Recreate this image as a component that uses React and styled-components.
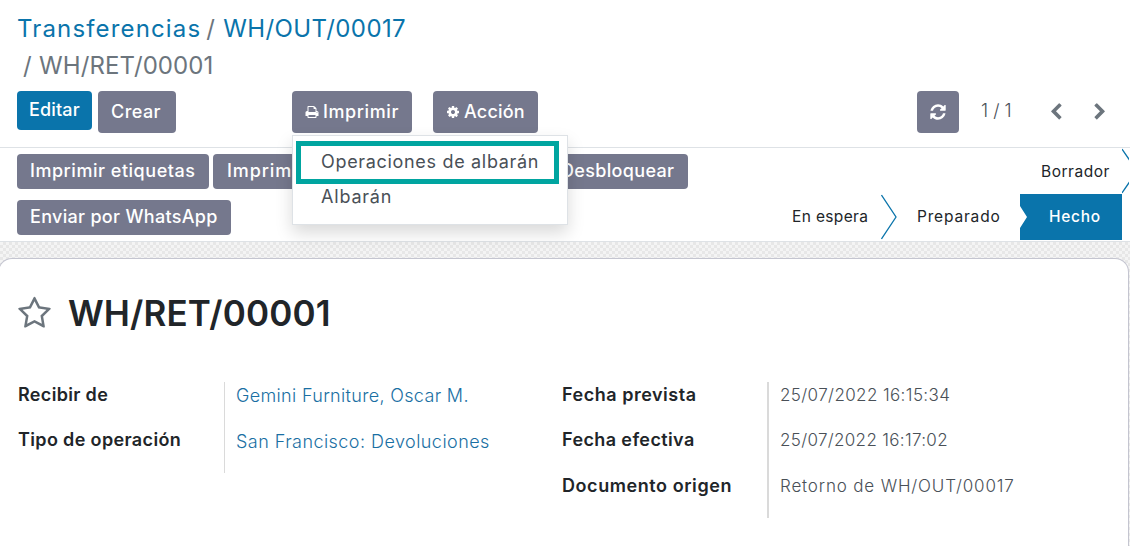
import React from 'react';
import styled, { createGlobalStyle } from 'styled-components';

const Global = createGlobalStyle`
  *, *::before, *::after { box-sizing: border-box; }
  html, body, #root { height: 100%; }
  body {
    margin: 0;
    overflow: hidden;
    background: #fff;
    color: #495057;
    font-family: Inter, "Open Sans", sans-serif;
    font-size: 18px;
    line-height: 24px;
    white-space: nowrap;
  }
`;

const ICONS = {
  print: 'M448 1536h896v-256h-896v256zm0-640h896v-384h-160q-40 0-68-28t-28-68v-160h-640v640zm1152 64q0-26-19-45t-45-19-45 19-19 45 19 45 45 19 45-19 19-45zm128 0v416q0 13-9.5 22.5t-22.5 9.5h-224v160q0 40-28 68t-68 28h-960q-40 0-68-28t-28-68v-160h-224q-13 0-22.5-9.5t-9.5-22.5v-416q0-79 56.5-135.5t135.5-56.5h64v-544q0-40 28-68t68-28h672q40 0 88 20t76 48l152 152q28 28 48 76t20 88v256h64q79 0 135.5 56.5t56.5 135.5z',
  cog: 'M1152 896q0-106-75-181t-181-75-181 75-75 181 75 181 181 75 181-75 75-181zm512-109v222q0 12-8 23t-20 13l-185 28q-19 54-39 91 35 50 107 138 10 12 10 25t-9 23q-27 37-99 108t-94 71q-12 0-26-9l-138-108q-44 23-91 38-16 136-29 186-7 28-36 28h-222q-14 0-24.5-8.5t-11.5-21.5l-28-184q-49-16-90-37l-141 107q-10 9-25 9-14 0-25-11-126-114-165-168-7-10-7-23 0-12 8-23 15-21 51-66.5t54-70.5q-27-50-41-99l-183-27q-13-2-21-12.5t-8-23.5v-222q0-12 8-23t19-13l186-28q14-46 39-92-40-57-107-138-10-12-10-24 0-10 9-23 26-36 98.5-107.5t94.5-71.5q13 0 26 10l138 107q44-23 91-38 16-136 29-186 7-28 36-28h222q14 0 24.5 8.5t11.5 21.5l28 184q49 16 90 37l142-107q9-9 24-9 13 0 25 10 129 119 165 170 7 8 7 22 0 12-8 23-15 21-51 66.5t-54 70.5q26 50 41 98l183 28q13 2 21 12.5t8 23.5z',
  refresh: 'M1639 1056q0 5-1 7-64 268-268 434.5t-478 166.5q-146 0-282.5-55t-243.5-157l-129 129q-19 19-45 19t-45-19-19-45v-448q0-26 19-45t45-19h448q26 0 45 19t19 45-19 45l-137 137q71 66 161 102t187 36q134 0 250-65t186-179q11-17 53-117 8-23 30-23h192q13 0 22.5 9.5t9.5 22.5zm25-800v448q0 26-19 45t-45 19h-448q-26 0-45-19t-19-45 19-45l138-138q-148-137-349-137-134 0-250 65t-186 179q-11 17-53 117-8 23-30 23h-199q-13 0-22.5-9.5t-9.5-22.5v-7q65-268 270-434.5t480-166.5q146 0 284 55.5t245 156.5l130-129q19-19 45-19t45 19 19 45z',
  left: 'M1427 301l-531 531 531 531q19 19 19 45t-19 45l-166 166q-19 19-45 19t-45-19l-742-742q-19-19-19-45t19-45l742-742q19-19 45-19t45 19l166 166q19 19 19 45t-19 45z',
  right: 'M1363 877l-742 742q-19 19-45 19t-45-19l-166-166q-19-19-19-45t19-45l531-531-531-531q-19-19-19-45t19-45l166-166q19-19 45-19t45 19l742 742q19 19 19 45t-19 45z',
  star: 'M1201 1004l306-297-422-62-189-382-189 382-422 62 306 297-73 421 378-199 377 199zm527-357q0 22-26 48l-363 354 86 500q1 7 1 20 0 50-41 50-19 0-40-12l-449-236-449 236q-22 12-40 12-21 0-31.5-14.5t-10.5-35.5q0-6 2-20l86-500-364-354q-25-27-25-48 0-37 56-46l502-73 225-455q19-41 49-41t49 41l225 455 502 73q56 9 56 46z',
};

const Svg = styled.svg`
  display: block;
  flex: none;
  width: ${(p) => p.$size}px;
  height: ${(p) => p.$size}px;
  fill: currentColor;
`;

const Icon = ({ name, size }) => (
  <Svg viewBox="0 0 1792 1792" $size={size}>
    <path d={ICONS[name]} />
  </Svg>
);

const Text = styled.span`
  letter-spacing: ${(p) => p.$track || 0}px;
`;

const Page = styled.div`
  height: 100%;
  display: flex;
  flex-direction: column;
  overflow: hidden;
`;

const ControlPanel = styled.header`
  height: 148px;
  flex: none;
  padding: 10px 8px 0 17px;
  border-bottom: 1px solid #dee2e6;
`;

const Breadcrumb = styled.nav`
  color: #6c757d;
  font-size: 24px;
  font-weight: 370;
  line-height: 37px;
`;

const CrumbLine = styled.div`
  display: flex;
`;

const Crumb = styled(Text)`
  color: ${(p) => (p.$link ? '#0a74ab' : 'inherit')};
`;

const Slash = styled.span`
  width: 22px;
  padding-left: ${(p) => p.$pad}px;
`;

const Toolbar = styled.div`
  display: flex;
  align-items: flex-start;
  margin-top: 7px;
`;

const Button = styled.button`
  display: flex;
  align-items: center;
  justify-content: flex-start;
  flex: none;
  gap: 4px;
  width: ${(p) => p.$width}px;
  height: ${(p) => p.$height || 42}px;
  margin: 0 0 0 ${(p) => p.$left || 0}px;
  padding: 0 0 ${(p) => (p.$height ? 2 : 1)}px ${(p) => p.$pad ?? 13}px;
  border: 0;
  border-radius: 4px;
  background: ${(p) => (p.$primary ? '#0a74ab' : '#75788d')};
  color: #fff;
  font: 500 18px/24px Inter, "Open Sans", sans-serif;
`;

const DropdownHost = styled.div`
  position: relative;
  margin-left: 116px;
`;

const Menu = styled.div`
  position: absolute;
  z-index: 2;
  top: 44px;
  left: 0;
  width: 276px;
  height: 90px;
  padding: 5px 3px;
  border: 1px solid #dee2e6;
  background: #fff;
  box-shadow: 0 8px 16px rgba(0, 0, 0, 0.15);
`;

const MenuItem = styled.div`
  display: flex;
  align-items: center;
  width: 263px;
  height: ${(p) => (p.$highlight ? 43 : 26)}px;
  padding: 0 0 ${(p) => (p.$highlight ? '2px 20px' : '1px 25px')};
  border: ${(p) => (p.$highlight ? '5px solid #00a5a0' : '0')};
`;

const Pager = styled.div`
  display: flex;
  align-items: center;
  height: 42px;
  margin-left: auto;
`;

const Count = styled.span`
  width: 75px;
  padding: 0 0 2px 22px;
  font-weight: 350;
`;

const Arrow = styled.span`
  display: flex;
  justify-content: center;
  width: 44px;
  padding-bottom: 1px;
  color: #6c757d;
`;

const StatusPanel = styled.section`
  display: flex;
  justify-content: space-between;
  height: 94px;
  flex: none;
  padding-left: 17px;
  border-bottom: 1px solid #dee2e6;
`;

const Actions = styled.div`
  display: flex;
  flex-direction: column;
  gap: 11px;
  padding-top: 6px;
`;

const ActionRow = styled.div`
  display: flex;
  gap: 4px;
`;

const Stages = styled.div`
  display: flex;
  flex-direction: column;
  width: 350px;
  color: #212529;
  font-size: 15.5px;
`;

const StageRow = styled.div`
  display: flex;
  align-items: center;
  justify-content: flex-end;
  height: 46px;
  padding-right: ${(p) => p.$right}px;
`;

const Stage = styled.div`
  display: flex;
  align-items: center;
  flex: none;
  width: ${(p) => p.$width}px;
  height: 46px;
  padding: ${(p) => p.$top || 0}px 0 0 ${(p) => p.$pad || 0}px;
`;

const ActiveStage = styled(Stage)`
  background: #0a74ab;
  color: #fff;
  font-weight: 500;
  clip-path: polygon(0 0, 100% 0, 100% 100%, 0 100%, 0 34px, 7px 23px, 0 12px);
`;

const Chevron = styled.svg`
  display: block;
  flex: none;
  width: ${(p) => p.$width}px;
  height: 46px;
  fill: none;
  stroke: #0a74ab;
  stroke-width: 1.3;
`;

const Backdrop = styled.main`
  flex: 1;
  min-height: 0;
  padding: 16px 1px 0 0;
  overflow: hidden;
  background: repeating-conic-gradient(#e7e7e7 0 25%, #f4f4f4 0 50%) 0 0 / 6px 6px;
`;

const Sheet = styled.article`
  height: 100%;
  margin-left: -2px;
  padding: 33px 0 0 20px;
  border: 1px solid #c4c5d0;
  border-bottom: 0;
  border-radius: 14px 14px 0 0;
  background: #fff;
`;

const TitleRow = styled.div`
  display: flex;
  align-items: center;
  gap: 16px;
  height: 42px;
  margin-left: -2px;
  color: #6c757d;
`;

const Title = styled.h1`
  margin: 0;
  color: #212529;
  font-size: 35px;
  font-weight: 600;
  line-height: 42px;
  letter-spacing: 0.15px;
`;

const Groups = styled.div`
  display: flex;
  margin-top: 48px;
`;

const Group = styled.div`
  display: flex;
  width: ${(p) => p.$width}px;
`;

const Labels = styled.div`
  width: ${(p) => p.$width}px;
  margin-left: ${(p) => p.$shift || 0}px;
  color: #212529;
  font-weight: 600;
`;

const Values = styled.div`
  height: ${(p) => p.$height}px;
  padding-left: 11px;
  border-left: ${(p) => p.$rule}px solid #dadada;
  color: ${(p) => (p.$link ? '#1a6fa3' : '#495057')};
  font-size: ${(p) => p.$font || 18}px;
  font-weight: 350;
`;

const Field = styled(Text)`
  display: block;
  height: ${(p) => p.$height || 45}px;
  line-height: ${(p) => p.$line || 25}px;
`;

export default function App() {
  return (
    <Page>
      <Global />
      <ControlPanel>
        <Breadcrumb>
          <CrumbLine>
            <Crumb $link $track={1.15}>Transferencias</Crumb>
            <Slash $pad={5}>/</Slash>
            <Crumb $link $track={0.4}>WH/OUT/00017</Crumb>
          </CrumbLine>
          <CrumbLine>
            <Slash $pad={6}>/</Slash>
            <Crumb $track={0.1}>WH/RET/00001</Crumb>
          </CrumbLine>
        </Breadcrumb>
        <Toolbar>
          <Button $primary $width={75} $height={39} $pad={12}><Text $track={0.14}>Editar</Text></Button>
          <Button $width={78} $left={6}><Text $track={0.45}>Crear</Text></Button>
          <DropdownHost>
            <Button $width={120}>
              <Icon name="print" size={14} />
              <Text $track={0.6}>Imprimir</Text>
            </Button>
            <Menu>
              <MenuItem $highlight><Text $track={0.68}>Operaciones de albarán</Text></MenuItem>
              <MenuItem><Text $track={0.8}>Albarán</Text></MenuItem>
            </Menu>
          </DropdownHost>
          <Button $width={105} $left={21}>
            <Icon name="cog" size={14} />
            <Text $track={0.2}>Acción</Text>
          </Button>
          <Pager>
            <Button $width={42} $pad={12}><Icon name="refresh" size={18} /></Button>
            <Count>1 / 1</Count>
            <Arrow><Icon name="left" size={18} /></Arrow>
            <Arrow><Icon name="right" size={18} /></Arrow>
          </Pager>
        </Toolbar>
      </ControlPanel>
      <StatusPanel>
        <Actions>
          <ActionRow>
            <Button $width={192} $height={35}><Text $track={0.53}>Imprimir etiquetas</Text></Button>
            <Button $width={331} $height={35} $pad={14}><Text $track={0.9}>Imprimir</Text></Button>
            <Button $width={140} $height={35}><Text $track={0.33}>Desbloquear</Text></Button>
          </ActionRow>
          <ActionRow>
            <Button $width={214} $height={35}><Text $track={0.31}>Enviar por WhatsApp</Text></Button>
          </ActionRow>
        </Actions>
        <Stages>
          <StageRow $right={1}>
            <Stage $width={81} $top={1}><Text $track={0.53}>Borrador</Text></Stage>
            <Chevron $width={7} viewBox="0 0 7 46"><path d="M0 1L15 23L0 45" /></Chevron>
          </StageRow>
          <StageRow $right={8}>
            <Stage $width={89}><Text $track={0.35}>En espera</Text></Stage>
            <Chevron $width={16} viewBox="0 0 16 46"><path d="M0.5 1L15 23L0.5 45" /></Chevron>
            <Stage $width={123} $pad={20}><Text $track={0.82}>Preparado</Text></Stage>
            <ActiveStage $width={102} $pad={29}><Text $track={0.7}>Hecho</Text></ActiveStage>
          </StageRow>
        </Stages>
      </StatusPanel>
      <Backdrop>
        <Sheet>
          <TitleRow>
            <Icon name="star" size={35} />
            <Title>WH/RET/00001</Title>
          </TitleRow>
          <Groups>
            <Group $width={543}>
              <Labels $width={206} $shift={-1}>
                <Field $track={0.33}>Recibir de</Field>
                <Field $track={0.36}>Tipo de operación</Field>
              </Labels>
              <Values $link $rule={1} $height={91}>
                <Field $line={27} $height={46} $track={0.33}>Gemini Furniture, Oscar M.</Field>
                <Field $line={27} $track={0.45}>San Francisco: Devoluciones</Field>
              </Values>
            </Group>
            <Group>
              <Labels $width={205}>
                <Field $track={0.52}>Fecha prevista</Field>
                <Field $height={46} $track={0.39}>Fecha efectiva</Field>
                <Field $track={0.57}>Documento origen</Field>
              </Labels>
              <Values $rule={2} $height={136} $font={17}>
                <Field $line={27} $track={0.39}>25/07/2022 16:15:34</Field>
                <Field $line={27} $height={46} $track={0.33}>25/07/2022 16:17:02</Field>
                <Field $line={27} $track={0.84}>Retorno de WH/OUT/00017</Field>
              </Values>
            </Group>
          </Groups>
        </Sheet>
      </Backdrop>
    </Page>
  );
}
